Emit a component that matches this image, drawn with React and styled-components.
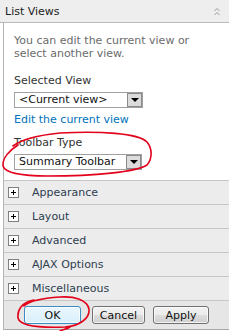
import React from "react";
import styled, { createGlobalStyle } from "styled-components";

const Global = createGlobalStyle`
  html, body { margin: 0; padding: 0; background: #fff; }
  body { font-family: "DejaVu Sans", Verdana, sans-serif; }
`;

const Panel = styled.div`
  position: relative;
  width: 229px;
  height: 331px;
  overflow: hidden;
  font-size: 11px;
`;

const Header = styled.div`
  height: 23px;
  box-sizing: border-box;
  background: #eeeeee;
  border-bottom: 1px solid #b9b9b9;
  display: flex;
  align-items: center;
  justify-content: space-between;
  padding: 0 8px 0 5px;
  color: #222;
  font-size: 11px;
`;

const Frame = styled.div`
  margin-left: 3px;
  border-left: 1px solid #b5b5b5;
`;

const Body = styled.div`
  padding: 11px 10px 10px 10px;
  display: flex;
  flex-direction: column;
`;

const Intro = styled.p`
  margin: 0 0 14px;
  color: #6b6b6b;
  line-height: 13px;
`;

const Label = styled.div`
  color: #333;
  line-height: 13px;
  margin-bottom: 5px;
`;

const Select = styled.div`
  width: ${(p) => p.$w}px;
  height: 16px;
  box-sizing: border-box;
  border: 1px solid #a0a0a0;
  display: flex;
  align-items: stretch;
  background: #fff;
  color: #111;
`;

const SelectText = styled.div`
  flex: 1;
  padding-left: 4px;
  line-height: 14px;
  white-space: nowrap;
  overflow: hidden;
`;

const Arrow = styled.div`
  width: 15px;
  box-sizing: border-box;
  border: 1px solid #8a8a8a;
  background: #dcdcdc;
  display: flex;
  align-items: center;
  justify-content: center;
  &::after {
    content: "";
    border-left: 4px solid transparent;
    border-right: 4px solid transparent;
    border-top: 4px solid #000;
  }
`;

const Link = styled.a`
  color: #0072bc;
  text-decoration: none;
  line-height: 13px;
  margin-top: 5px;
  margin-bottom: 10px;
`;

const Row = styled.div`
  height: 24px;
  box-sizing: border-box;
  border-top: 1px solid #c6c6c6;
  background: #ececec;
  display: flex;
  align-items: center;
  padding-left: 4px;
  color: #2c3e50;
`;

const PlusBox = styled.span`
  width: 11px;
  height: 11px;
  box-sizing: border-box;
  border: 1px solid #808080;
  background: #fff;
  position: relative;
  margin-right: 13px;
  &::before, &::after {
    content: "";
    position: absolute;
    background: #000;
  }
  &::before { left: 2px; top: 4px; width: 5px; height: 1px; }
  &::after { left: 4px; top: 2px; width: 1px; height: 5px; }
`;

const ButtonBar = styled.div`
  height: 30px;
  box-sizing: border-box;
  border-top: 1px solid #c6c6c6;
  border-bottom: 1px solid #a8a8a8;
  background: #e6e6e6;
  display: flex;
  align-items: center;
  padding-left: 20px;
`;

const Button = styled.button`
  width: ${(p) => p.$w}px;
  height: 18px;
  margin-right: ${(p) => p.$mr}px;
  padding: 0;
  font-family: "DejaVu Sans", Verdana, sans-serif;
  font-size: 11px;
  color: #111;
  border-radius: 3px;
  border: 1px solid ${(p) => (p.$focus ? "#3c8dc4" : "#707070")};
  background: ${(p) =>
    p.$focus
      ? "linear-gradient(#eaf6fd, #d9f0fc)"
      : "linear-gradient(#f2f2f2, #ebebeb 50%, #dddddd 51%, #cfcfcf)"};
  box-shadow: inset 0 0 0 1px rgba(255,255,255,0.7);
`;

const Marks = styled.svg`
  position: absolute;
  left: 0;
  top: 0;
  pointer-events: none;
`;

const sections = ["Appearance", "Layout", "Advanced", "AJAX Options", "Miscellaneous"];

export default function App() {
  return (
    <>
      <Global />
      <Panel>
        <Header>
          <span>List Views</span>
          <svg width="8" height="9" viewBox="0 0 8 9">
            <path d="M1.5 4 L4 1.5 L6.5 4 M1.5 8 L4 5.5 L6.5 8" fill="none" stroke="#9a9a9a" strokeWidth="1" />
          </svg>
        </Header>
        <Frame>
          <Body>
            <Intro>You can edit the current view or select another view.</Intro>
            <Label>Selected View</Label>
            <Select $w={129}>
              <SelectText>&lt;Current view&gt;</SelectText>
              <Arrow />
            </Select>
            <Link href="#">Edit the current view</Link>
            <Label>Toolbar Type</Label>
            <Select $w={128}>
              <SelectText>Summary Toolbar</SelectText>
              <Arrow />
            </Select>
          </Body>
          {sections.map((s) => (
            <Row key={s}>
              <PlusBox />
              {s}
            </Row>
          ))}
          <ButtonBar>
            <Button $w={57} $mr={11} $focus>OK</Button>
            <Button $w={53} $mr={8}>Cancel</Button>
            <Button $w={56} $mr={0}>Apply</Button>
          </ButtonBar>
        </Frame>
        <Marks width="229" height="331" viewBox="0 0 229 331">
          <path
            d="M18 145 C 10 150, 2 158, 3 166 C 5 173, 22 176, 48 176 C 95 176, 136 172, 147 165 C 153 158, 152 148, 147 142 C 138 133, 100 131, 60 133 C 40 135, 22 139, 13 146"
            fill="none" stroke="#e3001b" strokeWidth="1.6" strokeLinecap="round"
          />
          <path
            d="M34 300 C 22 302, 17 310, 18 318 C 20 326, 40 328, 65 327 C 80 326, 90 318, 89 309 C 87 300, 75 296, 60 297 C 45 298, 30 300, 24 306 M70 327 C 67 329, 62 330, 60 331"
            fill="none" stroke="#e3001b" strokeWidth="1.6" strokeLinecap="round"
          />
        </Marks>
      </Panel>
    </>
  );
}
